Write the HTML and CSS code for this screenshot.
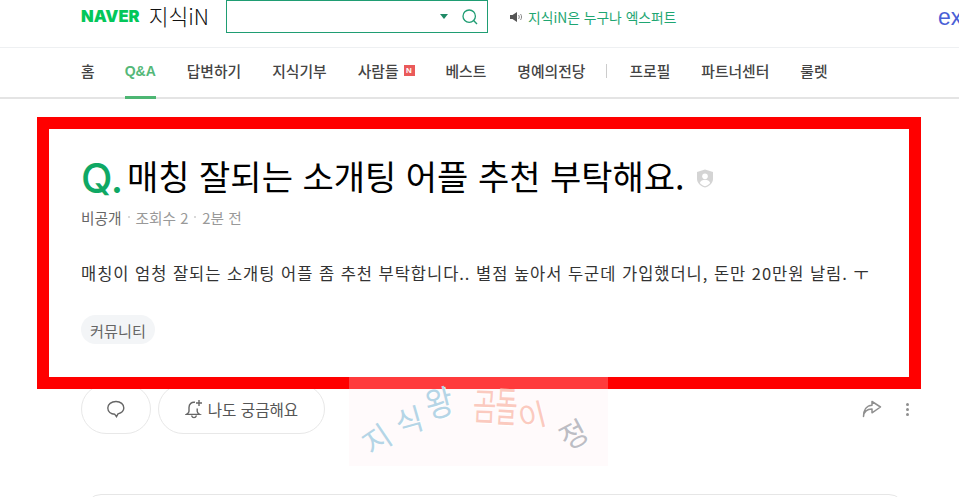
FILE: index.html
```html
<!DOCTYPE html>
<html lang="ko">
<head>
<meta charset="utf-8">
<title>지식iN</title>
<link rel="stylesheet" href="styles.css">
</head>
<body>
<div class="page">
  <header class="top">
    <div class="brand"><span class="naver">NAVER</span><span class="kin">지식iN</span></div>
    <div class="search">
      <span class="caret"></span>
      <svg class="search-icon" width="18" height="18" viewBox="0 0 18 18"><circle cx="8.2" cy="8.2" r="6.2" fill="none" stroke="#1f9d73" stroke-width="1.3"/><path d="M12.6 12.6L16 16" stroke="#1f9d73" stroke-width="1.4" fill="none"/></svg>
    </div>
    <div class="notice">
      <svg width="13" height="12" viewBox="0 0 13 12"><path d="M0 4h2.5L7 1v10L2.5 8H0z" fill="#555"/><path d="M8.5 4c1 1 1 3 0 4M10.5 3c1.4 1.6 1.4 4.4 0 6" stroke="#888" fill="none"/></svg>
      <span>지식iN은 누구나 엑스퍼트</span>
    </div>
    <span class="ex">expert</span>
  </header>
  <nav class="nav">
    <a class="nav-item">홈</a>
    <a class="nav-item active">Q&amp;A</a>
    <a class="nav-item">답변하기</a>
    <a class="nav-item">지식기부</a>
    <a class="nav-item">사람들<span class="new">N</span></a>
    <a class="nav-item">베스트</a>
    <a class="nav-item">명예의전당</a>
    <span class="nav-sep"></span>
    <a class="nav-item">프로필</a>
    <a class="nav-item">파트너센터</a>
    <a class="nav-item">룰렛</a>
  </nav>
  <main class="question">
    <h1 class="title"><span class="q">Q.</span><span class="title-text">매칭 잘되는 소개팅 어플 추천 부탁해요.</span>
      <svg class="shield" width="18" height="19" viewBox="0 0 18 19"><path d="M9 .5l8 2.6v6.6c0 4.400-3.400 7.400-8 8.800-4.600-1.400-8-4.400-8-8.800V3.100z" fill="#d4d4d4"/><circle cx="9" cy="7.300" r="2.800" fill="#fff"/><path d="M3.800 14c.8-2.200 2.800-3.300 5.200-3.300s4.400 1.100 5.200 3.300c-1.300 1.500-3.100 2.600-5.200 3.300-2.100-.7-3.900-1.800-5.200-3.300z" fill="#fff"/></svg>
    </h1>
    <div class="meta"><span class="author">비공개</span><i class="dot"></i><span>조회수 2</span><i class="dot"></i><span>2분 전</span></div>
    <p class="body-text">매칭이 엄청 잘되는 소개팅 어플 좀 추천 부탁합니다.. 별점 높아서 두군데 가입했더니, 돈만 20만원 날림. ㅜ</p>
    <span class="tag">커뮤니티</span>
  </main>
  <section class="actions">
    <button class="pill pill-icon"><svg width="20" height="20" viewBox="0 0 20 20"><path d="M10 2.500c-4.700 0-8.200 2.800-8.200 6.500 0 3.500 3.100 6 7 6.300l1.700 2.300 1.500-2.700c3.300-.9 5.800-3.200 5.800-5.900 0-3.700-3.100-6.500-7.800-6.500z" fill="none" stroke="#666" stroke-width="1.400"/></svg></button>
    <button class="pill pill-wide"><svg width="18" height="20" viewBox="0 0 18 20"><path d="M10 3.300C6.700 2.700 4 5 4 8.400v3.800c0 1.300-.9 2.300-2.500 3.200h13c-1.500-.9-2.300-1.900-2.300-3.200V9.500" fill="none" stroke="#666" stroke-width="1.400"/><path d="M6.500 16.500c.5 1.500 1.500 2.200 2.500 2.200s2-.7 2.500-2.200" fill="none" stroke="#666" stroke-width="1.300"/><path d="M14 1v6M11 4h6" stroke="#666" stroke-width="1.400"/></svg><span>나도 궁금해요</span></button>
    <span class="spacer"></span>
    <svg class="share" width="20" height="18" viewBox="0 0 20 18"><path d="M1.500 16.500c.5-4.500 3.700-7.400 8.500-7.400v3.700L18.500 7 10 1.500v3.700C4.500 5.500 1.500 10 1.500 16.500z" fill="none" stroke="#8f8f8f" stroke-width="1.500" stroke-linejoin="round"/></svg>
    <span class="more"><i></i><i></i><i></i></span>
  </section>
  <div class="next-card"></div>
  <aside class="stamp" aria-label="지식왕 곰돌이 정">
    <span class="s-a">지</span><span class="s-b">식</span><span class="s-c">왕</span>
    <span class="s-d">곰</span><span class="s-e">돌</span><span class="s-f">이</span><span class="s-g">정</span>
  </aside>
</div>
</body>
</html>
```
FILE: styles.css
```css
* { box-sizing: border-box; }
html, body { margin: 0; padding: 0; background: #fff; overflow: hidden; }
body { font-family: "Noto Sans CJK KR", "Noto Sans", sans-serif; color: #333; }
.page { position: relative; width: 959px; height: 497px; overflow: hidden; }

.top { height: 48px; display: flex; align-items: flex-start; padding-left: 81px; border-bottom: 1px solid #eef0f2; position: relative; }
.brand { display: flex; align-items: center; height: 32px; width: 145px; }
.naver { font: 900 16.500px/1 "Inter", "Liberation Sans", sans-serif; color: #03c75a; letter-spacing: 0; }
.kin { font-size: 21.500px; line-height: 1; color: #111; margin-left: 9px; font-weight: 300; }
.search { width: 262px; height: 33px; border: 1px solid #1f9d73; display: flex; align-items: center; justify-content: flex-end; padding-right: 8px; gap: 13px; }
.caret { width: 0; height: 0; border: 4px solid transparent; border-top: 5px solid #1f8a66; border-bottom: 0; }
.notice { display: flex; align-items: center; height: 33px; margin-left: 22px; gap: 5px; font-size: 13.800px; color: #1ea672; }
.ex { position: absolute; left: 938px; top: 3px; font: 400 23px/1.300 "Liberation Sans", sans-serif; color: #4a5fd6; white-space: nowrap; }

.nav { height: 51px; display: flex; align-items: stretch; gap: 31px; padding-left: 81px; border-bottom: 2px solid #e4e4e4; }
.nav-item { display: flex; align-items: center; font-size: 14.800px; font-weight: 500; color: #444; position: relative; height: 50px; padding-bottom: 5px; }
.active { color: #54b878; font-weight: 700; font-family: "Liberation Sans", sans-serif; font-size: 14px; margin-left: -1px; }
.active::after { content: ""; position: absolute; left: 0; right: 0; bottom: -1px; height: 3px; background: #4db673; }
.new { width: 11px; height: 11px; margin-left: 5px; background: #ea5a5a; color: #fff; font: 700 8px/11px "Liberation Sans", sans-serif; text-align: center; }
.nav-sep { width: 1px; height: 14px; background: #ccc; align-self: center; margin: 0 -9px 3px -10px; }

.question { position: relative; z-index: 1; margin: 18px 38px 0 37px; height: 272px; border: 12px solid #f00; padding: 17px 32px 0; background: #fff; }
.title { margin: 0; display: flex; align-items: center; height: 60px; font-weight: 400; font-size: 34px; color: #000; line-height: 1; }
.q { font: 500 41px/1 "Inter", sans-serif; color: #0fa864; width: 46px; flex: none; margin-top: 5px; }
.shield { margin-left: 11px; margin-top: 4px; }
.meta { display: flex; align-items: center; margin-top: -1px; height: 24px; font-size: 14.700px; color: #999; }
.author { color: #666; }
.dot { width: 2px; height: 2px; border-radius: 50%; background: #ccc; margin: 0 6px; }
.body-text { margin: 32px 0 0; font-size: 16.500px; letter-spacing: .97px; line-height: 24px; color: #333; white-space: nowrap; }
.tag { display: inline-flex; align-items: center; margin-top: 30px; height: 29px; padding: 0 9px; border-radius: 15px; background: #f3f5f7; font-size: 15.200px; color: #666; }

.actions { height: 50px; display: flex; align-items: center; gap: 7px; padding: 0 46px 0 81px; margin-top: -5px; }
.pill { height: 50px; background: #fff; border: 1px solid #e8e8e8; border-radius: 25px; display: flex; align-items: center; justify-content: center; font: inherit; font-size: 15.600px; color: #555; }
.pill-icon { width: 70px; }
.pill-wide { width: 167px; gap: 5px; padding: 0; }
.spacer { flex: 1; }
.share { margin-right: 17px; }
.more { display: flex; flex-direction: column; gap: 2px; margin-right: 4px; }
.more i { width: 3px; height: 3px; border-radius: 50%; background: #8f8f8f; }
.next-card { margin: 60px 54px 0 85px; height: 30px; border: 1px solid #e6e6e6; border-radius: 16px 16px 0 0; }

.stamp { position: absolute; z-index: 2; left: 349px; top: 377px; width: 259px; height: 89px; background: rgba(255, 235, 240, .25); font-family: "Noto Sans CJK KR", sans-serif; }
.stamp span { position: absolute; font-size: 30px; line-height: 1; font-weight: 400; text-shadow: 1px 1px 0 #fff; }
.s-a { left: 13px; top: 46px; color: #b5d5e6; transform: rotate(-34deg); }
.s-b { left: 46px; top: 27px; color: #b5d5e6; transform: rotate(-16deg); }
.s-c { left: 76px; top: 9px; color: #b5d5e6; transform: rotate(-14deg) scaleY(1.15); }
.s-d { left: 122px; top: 12px; color: #fbcabf; transform: rotate(2deg) scale(.85, 1.25); }
.s-e { left: 144px; top: 12px; color: #fbcabf; transform: rotate(3deg) scale(.8, 1.4); }
.s-f { left: 169px; top: 22px; color: #fbcabf; transform: rotate(-14deg); }
.s-g { left: 210px; top: 41px; color: #bdbdc4; transform: rotate(-28deg); }
```
